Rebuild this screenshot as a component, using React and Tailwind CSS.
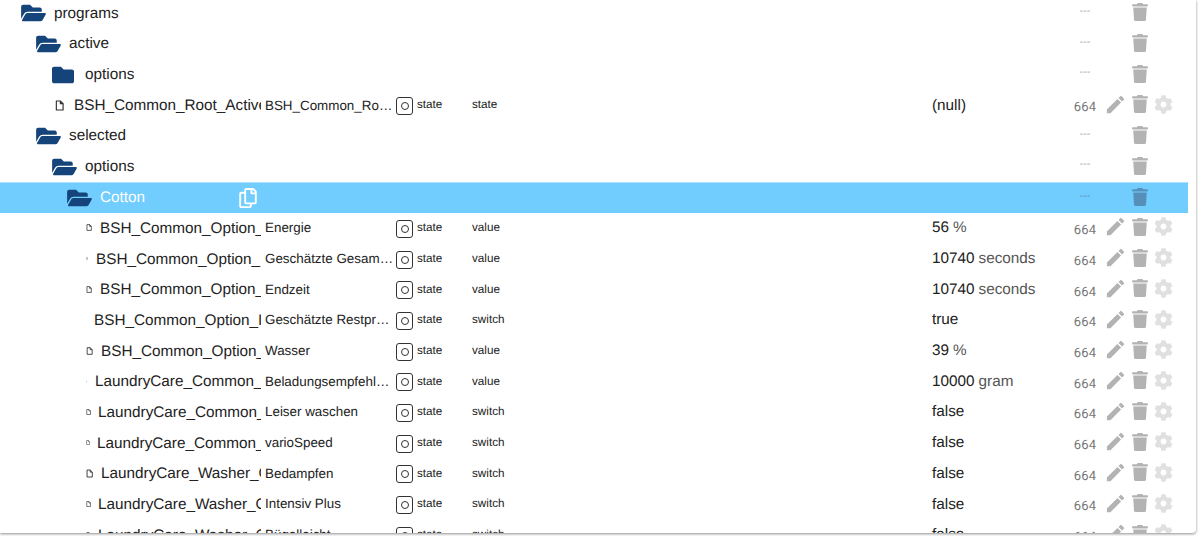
import React from "react";
import { FaFolder, FaFolderOpen, FaTrash, FaCog, FaRegCopy } from "react-icons/fa";
import { MdEdit } from "react-icons/md";

const fileRows = [
  { name: "BSH_Common_Option_", iconBox: "pl-[86px] pr-[8px]", icon: "w-[6px] h-[7px]", title: "Energie", role: "value", value: "56", unit: "%" },
  { name: "BSH_Common_Option_", iconBox: "pl-[86px] pr-[8px]", icon: "w-[2px] h-[3px]", title: "Geschätzte Gesamtprogrammdauer", role: "value", value: "10740", unit: "seconds" },
  { name: "BSH_Common_Option_", iconBox: "pl-[86px] pr-[8px]", icon: "w-[6px] h-[7px]", title: "Endzeit", role: "value", value: "10740", unit: "seconds" },
  { name: "BSH_Common_Option_I", iconBox: "pl-[94px]", title: "Geschätzte Restprogrammdauer", role: "switch", value: "true" },
  { name: "BSH_Common_Option_", iconBox: "pl-[86px] pr-[8px]", icon: "w-[7px] h-[8px]", title: "Wasser", role: "value", value: "39", unit: "%" },
  { name: "LaundryCare_Common_", iconBox: "pl-[86px] pr-[8px]", icon: "w-[1px] h-[3px]", title: "Beladungsempfehlung", role: "value", value: "10000", unit: "gram" },
  { name: "LaundryCare_Common_", iconBox: "pl-[86px] pr-[7px]", icon: "w-[5px] h-[6px]", title: "Leiser waschen", role: "switch", value: "false" },
  { name: "LaundryCare_Common_", iconBox: "pl-[86px] pr-[7px]", icon: "w-[4px] h-[5px]", title: "varioSpeed", role: "switch", value: "false" },
  { name: "LaundryCare_Washer_Option", iconBox: "pl-[86px] pr-[8px]", icon: "w-[7px] h-[9px]", title: "Bedampfen", role: "switch", value: "false" },
  { name: "LaundryCare_Washer_Option", iconBox: "pl-[86px] pr-[7px]", icon: "w-[5px] h-[6px]", title: "Intensiv Plus", role: "switch", value: "false" },
  { name: "LaundryCare_Washer_Option", iconBox: "pl-[86px] pr-[7px]", icon: "w-[5px] h-[6px]", title: "Bügelleicht", role: "switch", value: "false" },
];

function FileIcon({ className }) {
  return (
    <svg viewBox="0 0 20 24" className={className} fill="none" stroke="currentColor" strokeWidth="2.6">
      <path d="M3 2h9l6 6v14H3z" strokeLinejoin="round" />
      <path d="M12 2v6h6" />
    </svg>
  );
}

function RightCells({ mode, selected }) {
  return (
    <>
      <div className="ml-auto flex w-[32px] justify-center">
        {mode ? (
          <span className="relative top-[3px] font-['Roboto',sans-serif] text-[13px] tracking-[0.2px] text-[#777]">664</span>
        ) : (
          <span className={"relative -top-[2px] text-[11px] " + (selected ? "text-[#5c98c0]" : "text-[#aaa]")}>---</span>
        )}
      </div>
      <div className="ml-[4px] flex w-[23px] justify-center">
        {mode && <MdEdit className="relative -top-[1px] -left-[1px] h-[23px] w-[23px] text-[#b3b3b3]" />}
      </div>
      <div className="flex w-[24px] justify-center">
        <FaTrash className={"relative -top-[1px] h-[18px] w-[16px] " + (selected ? "text-[#5690b8]" : "text-[#b3b3b3]")} />
      </div>
      <div className="mr-[14px] flex w-[22px] justify-center">
        {mode && <FaCog className="relative -top-[1px] h-[19px] w-[19px] text-[#e0e0e0]" />}
      </div>
    </>
  );
}

function FolderRow({ indent, name, open, selected }) {
  return (
    <div className={"flex h-[30.7px] w-[1188px] items-center " + (selected ? "border-t border-[#a8e0fe] bg-[#70cdfe] text-white" : "text-[#222]")}>
      <div className={"flex items-center " + indent}>
        {open ? (
          <FaFolderOpen className="h-[22px] w-[25px] shrink-0 text-[#15447a]" />
        ) : (
          <FaFolder className="mr-[3px] h-[22px] w-[22px] shrink-0 text-[#15447a]" />
        )}
        <span className="ml-[8px] text-[15.3px] leading-none">{name}</span>
        {selected && <FaRegCopy className="ml-[94px] h-[20px] w-[18px] text-white" />}
      </div>
      <RightCells selected={selected} />
    </div>
  );
}

function StateRow({ name, iconBox, icon, title, role, value, unit }) {
  return (
    <div className="flex h-[30.7px] w-[1188px] items-center text-[#222]">
      <div className="flex w-[261px] shrink-0 items-center overflow-hidden">
        <div className={"flex shrink-0 items-center justify-start " + iconBox}>
          {icon && <FileIcon className={icon + " shrink-0 text-[#333]"} />}
        </div>
        <span className="relative top-[1px] whitespace-nowrap text-[15.3px] leading-[18px]">{name}</span>
      </div>
      <div className="ml-[4px] w-[129px] truncate py-[3px] text-[13.4px] leading-none">{title}</div>
      <div className="relative top-[1px] ml-[2px] flex h-[18px] w-[17px] items-center justify-center rounded-[3px] border border-[#333]">
        <span className="block h-[8px] w-[8px] rounded-full border border-[#333]"></span>
      </div>
      <span className="ml-[4px] w-[55px] text-[11.7px]">state</span>
      <span className="w-[460px] text-[11.7px]">{role}</span>
      <span className="whitespace-nowrap text-[15.3px] leading-none">
        {value}
        {unit && <span className="ml-[4px] text-[#555]">{unit}</span>}
      </span>
      <RightCells mode />
    </div>
  );
}

export default function App() {
  return (
    <div className="h-[536px] w-[1200px] overflow-hidden bg-white font-['Liberation_Sans',Arial,sans-serif] [text-rendering:geometricPrecision]">
      <div className="h-[533px] w-[1196px] overflow-hidden rounded-br-[4px] bg-white shadow-[0_1px_3px_rgba(0,0,0,0.45)]">
        <div className="-mt-[2.2px]">
          <FolderRow indent="pl-[21px]" name="programs" open />
          <FolderRow indent="pl-[36px]" name="active" open />
          <FolderRow indent="pl-[52px]" name="options" />
          <StateRow
            name="BSH_Common_Root_ActiveProgram"
            iconBox="pl-[55px] pr-[10px]"
            icon="w-[9px] h-[11px]"
            title="BSH_Common_Root_ActiveProgram"
            role="state"
            value="(null)"
          />
          <FolderRow indent="pl-[36px]" name="selected" open />
          <FolderRow indent="pl-[52px]" name="options" open />
          <FolderRow indent="pl-[67px]" name="Cotton" open selected />
          {fileRows.map((row, i) => (
            <StateRow key={i} {...row} />
          ))}
        </div>
      </div>
    </div>
  );
}
